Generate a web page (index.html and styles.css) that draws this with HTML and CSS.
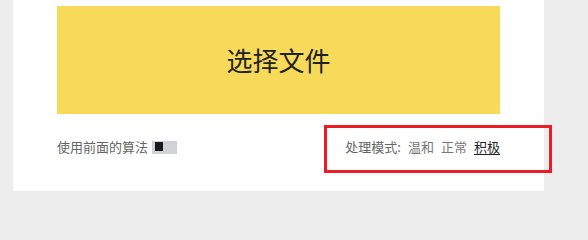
FILE: index.html
```html
<!DOCTYPE html>
<html lang="zh-CN">
<head>
<meta charset="utf-8">
<title>选择文件</title>
<link rel="stylesheet" href="styles.css">
</head>
<body>
<div class="panel">
  <button class="picker" type="button">选择文件</button>
  <div class="options">
    <label class="legacy">
      <span>使用前面的算法</span>
      <span class="toggle"><span class="knob"></span></span>
    </label>
    <div class="modes">
      <span class="modes-label">处理模式:</span>
      <a class="mode">温和</a>
      <a class="mode">正常</a>
      <a class="mode active">积极</a>
    </div>
  </div>
</div>
<div class="highlight"></div>
</body>
</html>
```
FILE: styles.css
```css
html, body {
  margin: 0;
  padding: 0;
}
body {
  background: #ededed;
  width: 588px;
  height: 224px;
  position: relative;
  overflow: hidden;
  font-family: "Noto Sans CJK SC", "Noto Sans", sans-serif;
}
.panel {
  margin-left: 13px;
  width: 443px;
  height: 185px;
  padding: 6px 44px 0 44px;
  background: #ffffff;
}
.picker {
  display: flex;
  align-items: center;
  justify-content: center;
  width: 443px;
  height: 108px;
  margin: 0;
  padding: 0;
  border: none;
  background: #f7da5a;
  color: #222222;
  font-family: "Noto Sans CJK SC", sans-serif;
  font-size: 26px;
  line-height: 1;
}
.options {
  display: flex;
  justify-content: space-between;
  align-items: center;
  margin-top: 24px;
  height: 18px;
  font-size: 13px;
  line-height: 18px;
  color: #666666;
}
.legacy {
  display: flex;
  align-items: center;
  gap: 4px;
}
.toggle {
  display: flex;
  width: 25px;
  height: 13px;
  background: #d0d2d5;
  box-sizing: border-box;
  padding: 1px 0 0 3px;
}
.knob {
  width: 8px;
  height: 9px;
  background: #1a1a1a;
}
.modes {
  display: flex;
  align-items: center;
  gap: 7px;
}
.mode {
  color: #777777;
  text-decoration: none;
}
.mode.active {
  color: #222222;
  text-decoration: underline;
  text-underline-offset: 2px;
}
.highlight {
  position: absolute;
  left: 324px;
  top: 125px;
  width: 222px;
  height: 42px;
  border: 3px solid #ec1c24;
}
```
